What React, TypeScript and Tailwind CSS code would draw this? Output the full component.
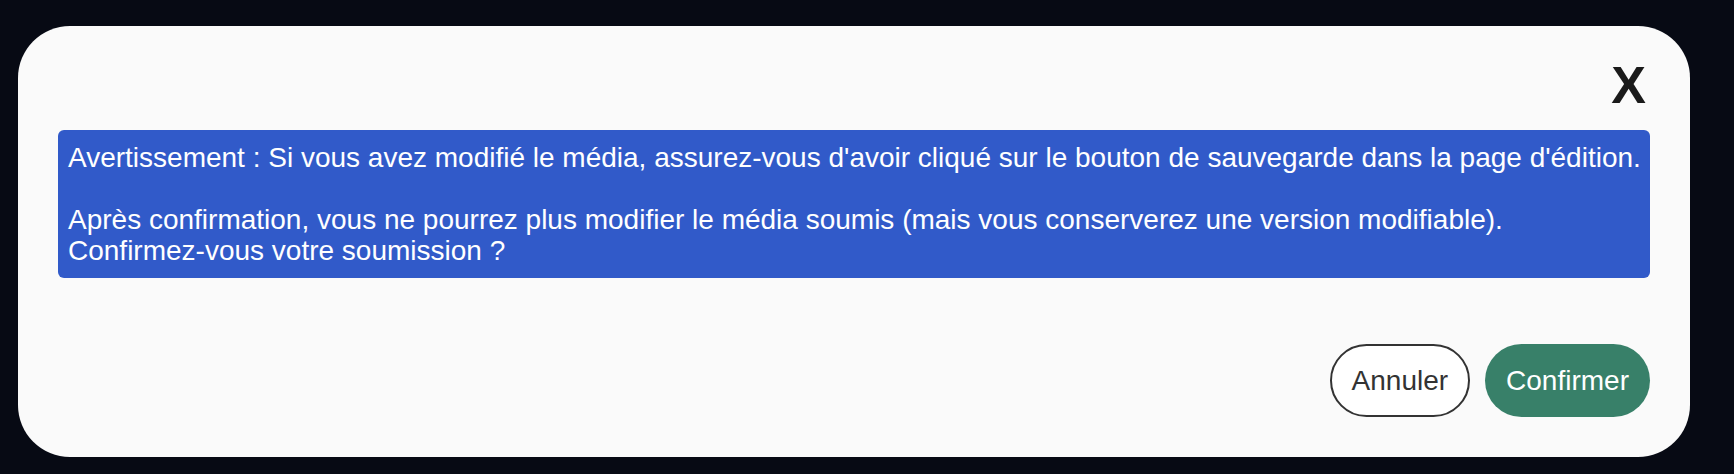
export default function App() {
  return (
    <div
      className="min-h-[474px] w-full bg-[#070a14] pl-[18px] pt-[26px] pb-[19px]"
      style={{ fontFamily: '"Liberation Sans", Arial, Helvetica, sans-serif' }}
    >
      <div className="flex w-[1672px] flex-col rounded-[52px] bg-[#fafafa] px-[40px] pb-[40px]">
        {/* close */}
        <div className="flex h-[104px] items-end justify-end pb-[19px]">
          <button className="mr-[4px] text-[52px] leading-none font-bold text-[#1a1a1a]">X</button>
        </div>

        {/* warning */}
        <div className="overflow-hidden whitespace-pre rounded-[6px] bg-[#315ac9] py-[12px] pl-[10px] pr-[4px] text-[28px] leading-[31px] text-white">
          {
            "Avertissement : Si vous avez modifié le média, assurez-vous d'avoir cliqué sur le bouton de sauvegarde dans la page d'édition.\n\nAprès confirmation, vous ne pourrez plus modifier le média soumis (mais vous conserverez une version modifiable).\nConfirmez-vous votre soumission ?"
          }
        </div>

        {/* actions */}
        <div className="mt-[66px] flex justify-end gap-[15px]">
          <button className="flex h-[73px] items-center rounded-full border-2 border-[#333333] bg-white px-[20px] text-[28px] text-[#333333]">
            Annuler
          </button>
          <button className="flex h-[73px] items-center rounded-full bg-[#388069] px-[21px] text-[28px] text-white">
            Confirmer
          </button>
        </div>
      </div>
    </div>
  )
}
